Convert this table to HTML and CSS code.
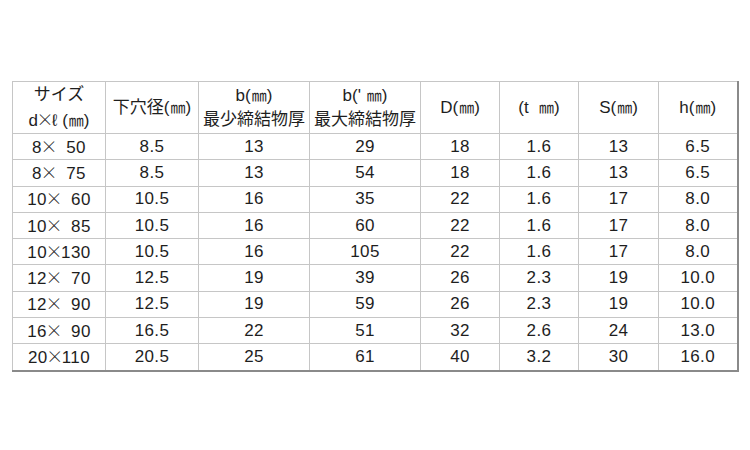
FILE: index.html
```html
<!DOCTYPE html>
<html lang="ja">
<head>
<meta charset="utf-8">
<link rel="stylesheet" href="styles.css">
</head>
<body>
<table class="spec">
<colgroup>
<col class="c1"><col class="c2"><col class="c3"><col class="c4"><col class="c5"><col class="c6"><col class="c7"><col class="c8">
</colgroup>
<thead>
<tr class="head">
<th>サイズ<br>d<span class="x">×</span>ℓ (<span class="mm">㎜</span>)</th>
<th>下穴径(<span class="mm">㎜</span>)</th>
<th>b(<span class="mm">㎜</span>)<br>最少締結物厚</th>
<th>b(' <span class="mm">㎜</span>)<br>最大締結物厚</th>
<th>D(<span class="mm">㎜</span>)</th>
<th>(t&nbsp; <span class="mm">㎜</span>)</th>
<th>S(<span class="mm">㎜</span>)</th>
<th>h(<span class="mm">㎜</span>)</th>
</tr>
</thead>
<tbody>
<tr><td>8<span class="x">×</span>&nbsp; 50</td><td>8.5</td><td>13</td><td>29</td><td>18</td><td>1.6</td><td>13</td><td>6.5</td></tr>
<tr><td>8<span class="x">×</span>&nbsp; 75</td><td>8.5</td><td>13</td><td>54</td><td>18</td><td>1.6</td><td>13</td><td>6.5</td></tr>
<tr><td>10<span class="x">×</span>&nbsp; 60</td><td>10.5</td><td>16</td><td>35</td><td>22</td><td>1.6</td><td>17</td><td>8.0</td></tr>
<tr><td>10<span class="x">×</span>&nbsp; 85</td><td>10.5</td><td>16</td><td>60</td><td>22</td><td>1.6</td><td>17</td><td>8.0</td></tr>
<tr><td>10<span class="x">×</span>130</td><td>10.5</td><td>16</td><td>105</td><td>22</td><td>1.6</td><td>17</td><td>8.0</td></tr>
<tr><td>12<span class="x">×</span>&nbsp; 70</td><td>12.5</td><td>19</td><td>39</td><td>26</td><td>2.3</td><td>19</td><td>10.0</td></tr>
<tr><td>12<span class="x">×</span>&nbsp; 90</td><td>12.5</td><td>19</td><td>59</td><td>26</td><td>2.3</td><td>19</td><td>10.0</td></tr>
<tr><td>16<span class="x">×</span>&nbsp; 90</td><td>16.5</td><td>22</td><td>51</td><td>32</td><td>2.6</td><td>24</td><td>13.0</td></tr>
<tr><td>20<span class="x">×</span>110</td><td>20.5</td><td>25</td><td>61</td><td>40</td><td>3.2</td><td>30</td><td>16.0</td></tr>
</tbody>
</table>
</body>
</html>
```

FILE: styles.css
```css
html, body {
  margin: 0;
  padding: 0;
  background: #ffffff;
}

body {
  font-family: "Liberation Sans", "Noto Sans CJK JP", sans-serif;
  color: #1e1e1e;
}

.spec {
  margin: 81px 0 0 12px;
  width: 726px;
  table-layout: fixed;
  border-collapse: collapse;
  border-top: 1px solid #9a9a9a;
  border-left: 1px solid #9a9a9a;
  border-right: 2px solid #8a8a8a;
  border-bottom: 2px solid #8a8a8a;
}

.c1 { width: 93px; }
.c2 { width: 93px; }
.c3 { width: 111px; }
.c4 { width: 111px; }
.c5 { width: 79px; }
.c6 { width: 79px; }
.c7 { width: 80px; }
.c8 { width: 79px; }

.spec th,
.spec td {
  border: 1px solid #c6c6c6;
  text-align: center;
  vertical-align: middle;
  padding: 0;
  font-weight: normal;
  white-space: nowrap;
}

.spec th {
  height: 51px;
  line-height: 24px;
  font-size: 17px;
}

.spec td {
  height: 25.3px;
  line-height: 20px;
  font-size: 17px;
  letter-spacing: 0.4px;
}

.x {
  font-family: "Noto Sans CJK JP", sans-serif;
  font-weight: 300;
  letter-spacing: 0;
  margin: 0 -1.5px;
}

.mm {
  font-family: "Noto Sans CJK JP", sans-serif;
  font-size: 15px;
  letter-spacing: -1px;
  margin: 0 1px;
}
```
